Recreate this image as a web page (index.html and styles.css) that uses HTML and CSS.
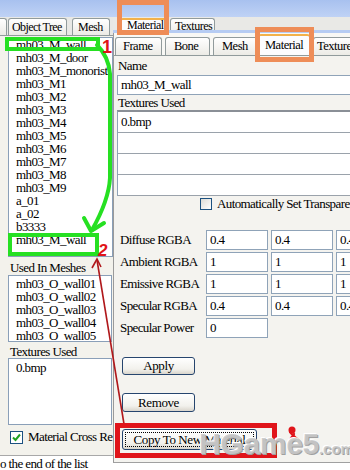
FILE: index.html
```html
<!DOCTYPE html>
<html>
<head>
<meta charset="utf-8"/>
<title>Material Editor</title>
<link rel="stylesheet" href="styles.css">
</head>
<body>
<div class="window">
    <div class="title-band"></div>

    <div class="main">
        <!-- left: object tree side -->
        <div class="left-col">
            <div class="tab-strip left-tabs">
                <span class="tab tab-stub"></span>
                <span class="tab tab-object">Object Tree</span>
                <span class="tab tab-mesh">Mesh</span>
            </div>

            <div class="left-body">
                <ul class="listbox object-list">
                    <li>mh03_M_wall</li>
                    <li>mh03_M_door</li>
                    <li>mh03_M_monorist</li>
                    <li>mh03_M1</li>
                    <li>mh03_M2</li>
                    <li>mh03_M3</li>
                    <li>mh03_M4</li>
                    <li>mh03_M5</li>
                    <li>mh03_M6</li>
                    <li>mh03_M7</li>
                    <li>mh03_M8</li>
                    <li>mh03_M9</li>
                    <li>a_01</li>
                    <li>a_02</li>
                    <li>b3333</li>
                    <li>mh03_M_wall</li>
                </ul>

                <div class="group-label">Used In Meshes</div>
                <ul class="listbox mesh-list">
                    <li>mh03_O_wall01</li>
                    <li>mh03_O_wall02</li>
                    <li>mh03_O_wall03</li>
                    <li>mh03_O_wall04</li>
                    <li>mh03_O_wall05</li>
                </ul>

                <div class="group-label tex-label">Textures Used</div>
                <ul class="listbox tex-list">
                    <li>0.bmp</li>
                </ul>

                <div class="check-row cross-ref">
                    <span class="checkbox checked">
                        <svg width="11" height="11" viewBox="0 0 11 11"><path d="M2 5.5 L4.5 8 L9 2.5" fill="none" stroke="#21a121" stroke-width="2"/></svg>
                    </span>
                    <span>Material Cross Re</span>
                </div>
            </div>

            <div class="status-line">o the end of the list</div>
        </div>

        <!-- right: material editor -->
        <div class="right-col">
            <div class="tab-strip right-tabs">
                <span class="tab selected tab-outer-mat">Material</span>
                <span class="tab tab-outer-tex">Textures</span>
            </div>
            <div class="blue-strip"></div>

            <div class="panel">
                <div class="tab-strip inner-tabs">
                    <span class="tab t-frame">Frame</span>
                    <span class="tab t-bone">Bone</span>
                    <span class="tab t-mesh">Mesh</span>
                    <span class="tab selected t-mat">Material</span>
                    <span class="tab t-tex">Texture</span>
                </div>

                <div class="panel-body">
                    <div class="field-label">Name</div>
                    <div class="field wide">mh03_M_wall</div>

                    <div class="field-label">Textures Used</div>
                    <div class="tex-grid">
                        <div class="tex-row">0.bmp</div>
                        <div class="tex-row"></div>
                        <div class="tex-row"></div>
                        <div class="tex-row"></div>
                    </div>

                    <div class="check-row auto-trans">
                        <span class="checkbox"></span>
                        <span>Automatically Set Transparency</span>
                    </div>

                    <div class="rgba-grid">
                        <span class="rgba-label">Diffuse RGBA</span>
                        <span class="field">0.4</span>
                        <span class="field">0.4</span>
                        <span class="field">0.4</span>

                        <span class="rgba-label">Ambient RGBA</span>
                        <span class="field">1</span>
                        <span class="field">1</span>
                        <span class="field">1</span>

                        <span class="rgba-label">Emissive RGBA</span>
                        <span class="field">1</span>
                        <span class="field">1</span>
                        <span class="field">1</span>

                        <span class="rgba-label">Specular RGBA</span>
                        <span class="field">0.4</span>
                        <span class="field">0.4</span>
                        <span class="field">0.4</span>

                        <span class="rgba-label">Specular Power</span>
                        <span class="field">0</span>
                    </div>

                    <div class="buttons">
                        <button class="btn btn-apply">Apply</button>
                        <button class="btn btn-remove">Remove</button>
                        <button class="btn btn-copy">Copy To New Material</button>
                    </div>
                </div>
            </div>
        </div>
    </div>

    <!-- hand drawn notes on top of the screenshot -->
    <svg class="marks" width="350" height="470" viewBox="0 0 350 470">
        <rect x="119.5" y="2.5" width="47" height="30" fill="none" stroke="#ee8d58" stroke-width="5"/>
        <rect x="257.5" y="29.5" width="54" height="30" fill="none" stroke="#ee8d58" stroke-width="5"/>

        <rect x="7" y="39" width="91" height="10" fill="none" stroke="#26e022" stroke-width="4"/>
        <path d="M97 45 C104 52, 109 60, 110 74 L110 178 C109 196, 101 214, 92 230" fill="none" stroke="#26e022" stroke-width="4" stroke-linecap="round"/>
        <path d="M84 218 L91 231 L104 223" fill="none" stroke="#26e022" stroke-width="4" stroke-linecap="round" stroke-linejoin="round"/>
        <rect x="10" y="235" width="87" height="19" fill="none" stroke="#26e022" stroke-width="4"/>

        <text x="102" y="53" class="mark-num">1</text>
        <text x="98" y="256" class="mark-num two">2</text>

        <path d="M97 260 L124 424" fill="none" stroke="#b0181b" stroke-width="1.6"/>
        <path d="M92 268 L97 259 L101 267" fill="none" stroke="#b0181b" stroke-width="1.6"/>
        <rect x="117.5" y="425.5" width="157" height="30" fill="none" stroke="#e0141a" stroke-width="5"/>

        <circle cx="292" cy="430" r="3.5" fill="#e0141a"/>
        <path d="M290 432 C293 436, 296 437, 299 441 M294 434 L289 441" fill="none" stroke="#e0141a" stroke-width="2.2" stroke-linecap="round"/>
    </svg>

    <div class="watermark">HGame5<span class="wm-com">.com</span></div>
</div>
</body>
</html>
```

FILE: styles.css
```css
* {
    box-sizing: border-box;
}

body {
    margin: 0px;
    padding: 0px;
    background-color: #fff;
    font-family: "Liberation Serif", "Times New Roman", serif;
    font-size: 13px;
    color: #000;
}

.window {
    position: relative;
    width: 350px;
    height: 470px;
    overflow: hidden;
    background-color: #f3f2ec;
}

.title-band {
    height: 17px;
    background: linear-gradient(#a8c1ef, #bfd2f5);
}

.main {
    display: grid;
    grid-template-columns: 113px 237px;
    height: 453px;
}

/* ---- tabs ---- */
.tab-strip {
    display: flex;
    align-items: flex-end;
    overflow: hidden;
}

.tab {
    display: block;
    flex: none;
    height: 17px;
    line-height: 16px;
    padding: 0px 3px;
    border: 1px solid #919b9c;
    border-bottom: 0px;
    border-radius: 3px 3px 0 0;
    background: linear-gradient(#fff, #ecebe6);
    font-size: 12px;
    letter-spacing: -0.5px;
    white-space: nowrap;
    overflow: hidden;
}

.tab.selected {
    background: #fcfcfe;
    border-top: 2px solid #f2b14a;
}

.left-tabs {
    height: 19px;
    background-color: #e8e8e5;
    border-bottom: 1px solid #919b9c;
}
.tab-stub {width: 7px; border-left: 0px; border-radius: 0 3px 0 0;}
.tab-object {width: 59px; margin-left: 1px; padding-left: 3px; letter-spacing: -0.6px;}
.tab-mesh {width: 38px; margin-left: 5px; padding-left: 5px;}

.right-tabs {
    height: 13px;
    background-color: #e9e9e6;
    align-items: flex-start;
}
.tab-outer-mat {width: 47px; margin-left: 7px; margin-top: 1px; height: 13px; line-height: 11px; padding-left: 6px;}
.tab-outer-tex {width: 45px; margin-left: 3px; margin-top: 1px; padding-left: 4px; line-height: 14px;}

.blue-strip {
    height: 3px;
    background-color: #b6ccf3;
}

/* ---- left column ---- */
.left-col {
    display: flex;
    flex-direction: column;
}

.left-body {
    height: 419px;
    padding: 1px 0px 0px 8px;
}

.listbox {
    list-style: none;
    margin: 0px;
    padding: 0px 0px 0px 7px;
    width: 105px;
    background-color: #fff;
    border: 1px solid #8a9fb8;
    overflow: hidden;
    white-space: nowrap;
    letter-spacing: -0.6px;
}
.listbox li {height: 13px; line-height: 13px;}

.object-list {height: 220px;}
.mesh-list {height: 67px; padding-top: 1px; width: 104px;}
.tex-list {height: 67px; padding-top: 2px; width: 104px;}

.group-label {
    margin-top: 4px;
    padding-left: 2px;
    height: 14px;
    line-height: 14px;
    letter-spacing: -0.6px;
}
.tex-label {margin-top: 3px; height: 13px;}

.check-row {
    display: flex;
    align-items: center;
    height: 14px;
    letter-spacing: -0.6px;
    white-space: nowrap;
}
.cross-ref {margin-top: 5px; padding-left: 2px;}

.checkbox {
    display: flex;
    flex: none;
    align-items: center;
    justify-content: center;
    width: 13px;
    height: 13px;
    margin-right: 5px;
    border: 1px solid #1c5180;
    background: linear-gradient(135deg, #dcdcd7, #fff);
}
.checkbox.checked {background: #fff;}

.status-line {
    flex: 1;
    border-top: 1px solid #a8a8a8;
    background-color: #fff;
    line-height: 15px;
    letter-spacing: -0.6px;
    white-space: nowrap;
}

/* ---- right column ---- */
.right-col {
    background-color: #fff;
    overflow: hidden;
}

.panel {
    height: 430px;
    background-color: #f4f3ef;
    border-left: 1px solid #9a9a9a;
    border-bottom: 1px solid #a0a0a0;
    overflow: hidden;
}

.inner-tabs {
    height: 22px;
    padding-left: 1px;
    background-color: #f8f8f5;
}
.inner-tabs .tab {height: 18px; line-height: 17px; font-size: 12.5px;}
.t-frame {width: 47px; padding-left: 7px;}
.t-bone {width: 45px; margin-left: 3px; padding-left: 8px;}
.t-mesh {width: 45px; margin-left: 3px; padding-left: 8px;}
.inner-tabs .t-mat {width: 52px; height: 21px; line-height: 18px; padding-left: 6px;}
.t-tex {width: 45px; margin-left: 3px; padding-left: 3px;}

.panel-body {
    border-top: 1px solid #919b9c;
    padding: 3px 0px 0px 3px;
    letter-spacing: -0.6px;
    white-space: nowrap;
}

.field-label {
    height: 14px;
    line-height: 14px;
    padding-left: 1px;
}

.field {
    display: block;
    height: 20px;
    line-height: 18px;
    padding-left: 3px;
    background-color: #fff;
    border: 1px solid #8fa3b8;
    overflow: hidden;
}
.field.wide {width: 240px; margin: 2px 0px 1px 0px;}

.tex-grid {
    width: 240px;
    height: 86px;
    background-color: #fff;
    border: 1px solid #8fa3b8;
    border-top: 2px solid #8a8f96;
}
.tex-row {height: 21px; line-height: 20px; padding-left: 3px; border-bottom: 1px solid #9aa2ab;}

.auto-trans {margin-top: 1px; padding-left: 83px; height: 13px;}
.auto-trans .checkbox {width: 12px; height: 12px;}

.rgba-grid {
    display: grid;
    grid-template-columns: 83px 62px 62px 62px;
    grid-auto-rows: 20px;
    column-gap: 3px;
    row-gap: 2px;
    margin: 20px 0px 0px 3px;
}
.rgba-label {line-height: 20px;}

.buttons {
    display: flex;
    flex-direction: column;
    align-items: flex-start;
    padding-left: 5px;
}

.btn {
    font-family: "Liberation Serif", serif;
    font-size: 13px;
    letter-spacing: -0.4px;
    color: #000;
    padding: 0px;
    border: 1px solid #26456e;
    border-radius: 3px;
    background: linear-gradient(#ffffff, #f2f1ec 70%, #d9d5cc);
    white-space: nowrap;
}
.btn-apply {width: 73px; height: 18px; margin-top: 19px;}
.btn-remove {width: 73px; height: 19px; margin-top: 18px;}
.btn-copy {width: 135px; height: 21px; margin-top: 17px; outline: 1px dotted #000; outline-offset: -4px;}

/* ---- overlays ---- */
.marks {
    position: absolute;
    left: 0px;
    top: 0px;
    pointer-events: none;
}

.mark-num {
    font-family: "Liberation Sans", sans-serif;
    font-weight: bold;
    font-size: 18px;
    fill: #e01418;
}
.mark-num.two {font-style: italic; font-size: 17px;}

.watermark {
    position: absolute;
    left: 199px;
    top: 429px;
    font-family: "Liberation Sans", sans-serif;
    font-weight: bold;
    font-size: 30px;
    line-height: 30px;
    letter-spacing: -0.3px;
    color: rgba(200, 200, 200, 0.88);
    text-shadow: 1px 1px 0 #a0a0a0, -1px -1px 0 #fff;
    pointer-events: none;
}
.wm-com {font-size: 15px; letter-spacing: 0px;}
```
